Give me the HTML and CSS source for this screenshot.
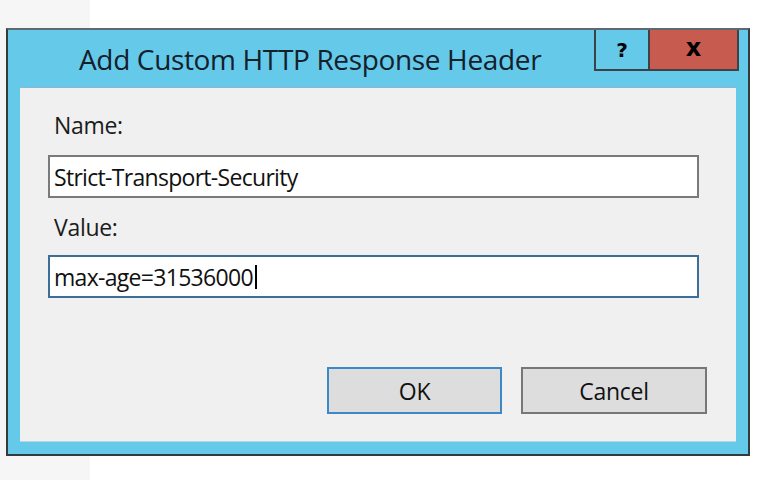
FILE: index.html
```html
<!DOCTYPE html>
<html>
<head>
<meta charset="utf-8">
<link rel="stylesheet" href="styles.css">
</head>
<body>
<div class="dialog">
  <div class="titlebar">
    <div class="title">Add Custom HTTP Response Header</div>
    <div class="controls">
      <div class="ctl help">?</div>
      <div class="ctl close">x</div>
    </div>
  </div>
  <div class="panel">
    <div class="label">Name:</div>
    <div class="field">Strict-Transport-Security</div>
    <div class="label label-value">Value:</div>
    <div class="field focused">max-age=31536000<span class="caret"></span></div>
    <div class="buttons">
      <div class="btn default">OK</div>
      <div class="btn">Cancel</div>
    </div>
  </div>
</div>
</body>
</html>
```
FILE: styles.css
```css
html, body {
  margin: 0;
  padding: 0;
}
body {
  width: 768px;
  height: 480px;
  overflow: hidden;
  background: linear-gradient(to right, #f6f6f6 90px, #ffffff 90px);
  font-family: "Open Sans", "Noto Sans", sans-serif;
  color: #111;
}
.dialog {
  box-sizing: border-box;
  width: 744px;
  height: 428px;
  margin: 28px 0 0 6px;
  border: 2px solid #353a3d;
  border-top-color: #5f6a70;
  background: #65c9ea;
  padding: 0 12px 12px 12px;
  display: flex;
  flex-direction: column;
}
.titlebar {
  height: 57px;
  display: flex;
  align-items: flex-start;
}
.title {
  flex: 1;
  padding-left: 59px;
  padding-top: 12px;
  font-size: 28px;
  letter-spacing: -0.35px;
  line-height: 34px;
  color: #14202a;
}
.controls {
  display: flex;
  margin-right: -3px;
  border: 2px solid #3c4245;
  border-top: 0;
  height: 39px;
}
.ctl {
  display: flex;
  align-items: center;
  justify-content: center;
  font-family: "DejaVu Sans", sans-serif;
  font-weight: bold;
  color: #000;
}
.help {
  width: 52px;
  border-right: 2px solid #3c4245;
  font-size: 20px;
}
.close {
  width: 87px;
  background: #c75b50;
  font-size: 24px;
  padding-bottom: 4px;
  box-sizing: border-box;
}
.panel {
  flex: 1;
  background: #f0f0f0;
  border-top: 1px solid #8fb6cb;
  border-bottom: 1px solid #b9d7e3;
  padding: 22px 37px 27px 28px;
  display: flex;
  flex-direction: column;
}
.label {
  font-size: 23px;
  letter-spacing: -0.3px;
  line-height: 30px;
  padding-left: 6px;
  color: #1b1b1b;
}
.field {
  box-sizing: border-box;
  height: 43px;
  margin-top: 15px;
  border: 2px solid #7a7a7a;
  background: #fff;
  padding: 0 0 0 4px;
  font-size: 23px;
  letter-spacing: -0.7px;
  line-height: 38px;
  color: #111;
  display: flex;
  align-items: center;
}
.label-value {
  margin-top: 14px;
}
.focused {
  margin-top: 13px;
  border-color: #3b6e99;
}
.caret {
  display: inline-block;
  width: 2px;
  height: 24px;
  background: #000;
  margin-left: 2px;
}
.buttons {
  margin-top: auto;
  display: flex;
  justify-content: flex-end;
  gap: 19px;
  margin-right: -8px;
}
.btn {
  box-sizing: border-box;
  height: 47px;
  width: 186px;
  border: 2px solid #777;
  background: #dddddd;
  font-size: 23px;
  letter-spacing: -0.3px;
  display: flex;
  align-items: center;
  justify-content: center;
  color: #111;
}
.btn.default {
  width: 175px;
  border-color: #3d88c6;
}
```
